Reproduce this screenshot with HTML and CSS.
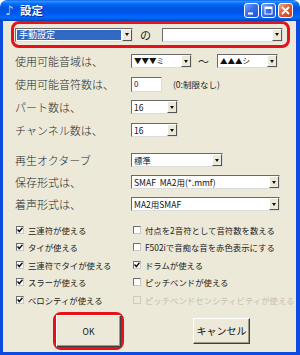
FILE: index.html
```html
<!DOCTYPE html>
<html lang="ja">
<head>
<meta charset="utf-8">
<title>設定</title>
<link rel="stylesheet" href="styles.css">
</head>
<body>
<div class="window">
  <div class="titlebar">
    <span class="ticon">♪</span>
    <span class="ttext">設定</span>
    <div class="tbtns">
      <span class="tb blue"><svg width="13" height="13" viewBox="0 0 13 13"><rect x="3" y="8.5" width="5" height="2" fill="#fff"/></svg></span>
      <span class="tb blue"><svg width="13" height="13" viewBox="0 0 13 13"><rect x="3" y="3" width="7" height="7" fill="none" stroke="#fff" stroke-width="1"/><rect x="3" y="3" width="7" height="2" fill="#fff"/></svg></span>
      <span class="tb red"><svg width="13" height="13" viewBox="0 0 13 13"><path d="M3.5 3.5 L9.5 9.5 M9.5 3.5 L3.5 9.5" stroke="#fff" stroke-width="1.8" stroke-linecap="round"/></svg></span>
    </div>
  </div>
  <div class="frame">
    <div class="preset">
      <div class="combo w-preset"><span class="val hl">手動設定</span><span class="drop"><i class="arr"></i></span></div>
      <span class="no">の</span>
      <div class="combo w-preset2"><span class="val"></span><span class="drop"><i class="arr"></i></span></div>
    </div>

    <div class="form">
      <div class="group">
        <div class="row">
          <span class="label">使用可能音域は、</span>
          <div class="combo w-range"><span class="val tri">▼▼▼ミ</span><span class="drop"><i class="arr"></i></span></div>
          <span class="tilde">～</span>
          <div class="combo w-range"><span class="val tri">▲▲▲シ</span><span class="drop"><i class="arr"></i></span></div>
        </div>
        <div class="row">
          <span class="label">使用可能音符数は、</span>
          <div class="field">0</div>
          <span class="note">(0:制限なし)</span>
        </div>
        <div class="row">
          <span class="label">パート数は、</span>
          <div class="combo w-num"><span class="val">16</span><span class="drop"><i class="arr"></i></span></div>
        </div>
        <div class="row">
          <span class="label">チャンネル数は、</span>
          <div class="combo w-num"><span class="val">16</span><span class="drop"><i class="arr"></i></span></div>
        </div>
      </div>
      <div class="group second">
        <div class="row">
          <span class="label">再生オクターブ</span>
          <div class="combo w-oct"><span class="val">標準</span><span class="drop"><i class="arr"></i></span></div>
        </div>
        <div class="row">
          <span class="label">保存形式は、</span>
          <div class="combo w-wide"><span class="val">SMAF&nbsp; MA2用(*.mmf)</span><span class="drop"><i class="arr"></i></span></div>
        </div>
        <div class="row">
          <span class="label">着声形式は、</span>
          <div class="combo w-wide"><span class="val">MA2用SMAF</span><span class="drop"><i class="arr"></i></span></div>
        </div>
      </div>
    </div>

    <div class="checks">
      <label class="chk"><span class="box"><svg width="6" height="6" viewBox="0 0 6 6"><path d="M0.5 2.5 L2.3 4.5 L5.5 0.8" fill="none" stroke="#111" stroke-width="1.5"/></svg></span>三連符が使える</label>
      <label class="chk"><span class="box"></span>付点を2音符として音符数を数える</label>
      <label class="chk"><span class="box"><svg width="6" height="6" viewBox="0 0 6 6"><path d="M0.5 2.5 L2.3 4.5 L5.5 0.8" fill="none" stroke="#111" stroke-width="1.5"/></svg></span>タイが使える</label>
      <label class="chk"><span class="box"></span>F502iで音痴な音を赤色表示にする</label>
      <label class="chk"><span class="box"><svg width="6" height="6" viewBox="0 0 6 6"><path d="M0.5 2.5 L2.3 4.5 L5.5 0.8" fill="none" stroke="#111" stroke-width="1.5"/></svg></span>三連符でタイが使える</label>
      <label class="chk"><span class="box"><svg width="6" height="6" viewBox="0 0 6 6"><path d="M0.5 2.5 L2.3 4.5 L5.5 0.8" fill="none" stroke="#111" stroke-width="1.5"/></svg></span>ドラムが使える</label>
      <label class="chk"><span class="box"><svg width="6" height="6" viewBox="0 0 6 6"><path d="M0.5 2.5 L2.3 4.5 L5.5 0.8" fill="none" stroke="#111" stroke-width="1.5"/></svg></span>スラーが使える</label>
      <label class="chk"><span class="box"></span>ピッチベンドが使える</label>
      <label class="chk"><span class="box"><svg width="6" height="6" viewBox="0 0 6 6"><path d="M0.5 2.5 L2.3 4.5 L5.5 0.8" fill="none" stroke="#111" stroke-width="1.5"/></svg></span>ベロシティが使える</label>
      <label class="chk disabled"><span class="box"></span>ピッチベンドセンシティビティが使える</label>
    </div>

    <div class="buttons">
      <div class="okwrap"><button class="btn ok">OK</button></div>
      <button class="btn cancel">キャンセル</button>
    </div>
  </div>
</div>
</body>
</html>
```

FILE: styles.css
```css
* { box-sizing: border-box; margin: 0; padding: 0; }
html, body { width: 300px; height: 355px; overflow: hidden; background: #fff; }
body { font-family: "Noto Sans CJK JP", "Noto Sans", sans-serif; color: #1c1c1c; }

.window { width: 300px; height: 355px; display: flex; flex-direction: column; }

.titlebar {
  height: 21px; flex: none;
  border-radius: 7px 7px 0 0;
  background: linear-gradient(to bottom, #0058ee 0%, #3593ff 5%, #288eff 9%, #127dff 13%, #036ffc 18%, #0262ee 25%, #0057e5 35%, #0054e3 45%, #0055eb 60%, #005bf5 70%, #026afe 80%, #0062ef 88%, #0052d6 94%, #0040ab 100%);
  display: flex; align-items: center; padding: 0 7px 0 5px;
}
.ticon { font-size: 13px; line-height: 1; color: #b9c4e0; width: 14px; font-family: "DejaVu Sans", sans-serif; }
.ttext { font-size: 11.5px; font-weight: bold; color: #fff; margin-left: 1px; text-shadow: 1px 1px 0 #0b2a8f; line-height: 1; }
.tbtns { margin-left: auto; display: flex; gap: 2px; }
.tb { width: 15px; height: 15px; border: 1px solid #fff; border-radius: 3px; display: flex; }
.tb.blue { background: linear-gradient(135deg, #7aa5f8 0%, #3a6fe8 45%, #2152d6 100%); }
.tb.red { background: linear-gradient(135deg, #f3a486 0%, #e35d34 45%, #c43e18 100%); }

.frame {
  flex: 1; background: #ece9d8;
  border: solid #0b4be0; border-width: 0 4px 3px 3px;
  display: flex; flex-direction: column;
}

.preset {
  margin-left: 8px; width: 279px; height: 27px;
  border: 3px solid #e5121c; border-radius: 8px;
  display: flex; align-items: center; padding-left: 1px;
}
.no { font-size: 11px; margin-left: 7px; width: 11px; }

.combo {
  height: 14px; display: flex; background: #fff;
  border: 1px solid; border-color: #6a6a6a #dcdcdc #dcdcdc #6a6a6a;
}
.w-preset { width: 118px; }
.w-preset2 { width: 121px; margin-left: 11px; }
.w-range { width: 61px; }
.w-num { width: 47px; }
.w-oct { width: 92px; }
.w-wide { width: 149px; }

.val {
  flex: 1; font-size: 8.5px; line-height: 12px; padding-left: 2px;
  white-space: nowrap; overflow: hidden; color: #111;
}
.val.hl { background: #316ac5; color: #fff; margin: 1px; line-height: 10px; font-size: 9px; overflow: visible; }
.val.tri { font-size: 7.5px; }
.drop {
  width: 10px; margin: 0; background: #ece9d8; flex: none;
  border: 1px solid; border-color: #fff #555 #555 #fff;
  display: flex; align-items: center; justify-content: center;
}
.arr { width: 0; height: 0; border-left: 2.5px solid transparent; border-right: 2.5px solid transparent; border-top: 3px solid #111; }

.form { padding-left: 12px; margin-top: 6px; display: flex; flex-direction: column; }
.group { display: flex; flex-direction: column; gap: 9px; }
.group.second { margin-top: 16px; gap: 8px; }
.row { display: flex; align-items: center; height: 14px; }
.label { width: 116px; font-size: 11px; line-height: 14px; white-space: nowrap; color: #2a2a2a; font-weight: 300; }
.tilde { font-size: 11px; width: 12px; margin-left: 6px; margin-right: 7px; }
.field {
  width: 31px; height: 15px; background: #fff; font-size: 8px; line-height: 11px; padding-left: 2px;
  border: 1px solid; border-color: #6a6a6a #dcdcdc #dcdcdc #6a6a6a;
}
.note { font-size: 8.5px; margin-left: 11px; color: #222; }

.checks {
  margin-top: 10px; padding-left: 13px;
  display: grid; grid-template-columns: 117px 1fr; grid-auto-rows: 17.5px;
}
.chk { display: flex; align-items: center; gap: 4px; font-size: 8.4px; white-space: nowrap; color: #1c1c1c; }
.box {
  width: 8px; height: 8px; background: #fff; flex: none;
  border: 1px solid; border-color: #6f6f6f #c8c8c8 #c8c8c8 #6f6f6f;
  display: flex; align-items: center; justify-content: center;
}
.chk.disabled { color: #c4c0b0; }
.chk.disabled .box { background: #ece9d8; border-color: #cfcbbb; }

.buttons { display: flex; align-items: center; padding-left: 50px; margin-top: 3px; }
.okwrap { width: 71px; height: 38px; border: 3px solid #e5121c; border-radius: 8px; display: flex; }
.btn {
  font-family: "Noto Sans CJK JP", "Noto Sans", sans-serif; color: #111;
  background: #ece9d8;
  border: 1px solid; border-color: #fff #404040 #404040 #fff;
  box-shadow: inset -1px -1px 0 #9d9a8c;
}
.ok { width: 65px; height: 32px; font-size: 8.5px; }
.cancel { width: 57px; height: 26px; margin-left: 69px; font-size: 10px; }
```
